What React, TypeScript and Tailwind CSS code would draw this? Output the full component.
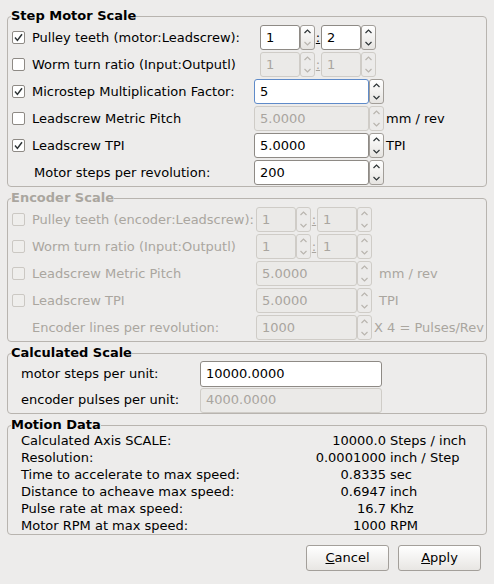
import React from "react";

const ink = "#2e3436";
const dim = "#b9b5af";

function Check({ checked, disabled }: { checked?: boolean; disabled?: boolean }) {
  return (
    <span
      className={`flex h-[13px] w-[13px] shrink-0 items-center justify-center rounded-[2px] border ${
        disabled ? "border-[#cbc8c3] bg-[#efeeec]" : "border-[#8e8a85] bg-white"
      }`}
    >
      {checked && (
        <svg width="9" height="9" viewBox="0 0 9 9">
          <path d="M1 4.6 L3.4 7.4 L8 1.2" fill="none" stroke={ink} strokeWidth="1.5" />
        </svg>
      )}
    </span>
  );
}

function Arrows({ disabled, downOff }: { disabled?: boolean; downOff?: boolean }) {
  const up = disabled ? dim : ink;
  const down = disabled || downOff ? dim : ink;
  return (
    <div
      className={`flex h-full w-[15px] shrink-0 flex-col rounded-[3px] border ${
        disabled ? "border-[#cfccc7] bg-[#ecebea]" : "border-[#a29e99] bg-gradient-to-b from-white to-[#e6e4e1]"
      }`}
    >
      <div className="flex flex-1 items-center justify-center">
        <svg width="7" height="5" viewBox="0 0 7 5">
          <path d="M0.5 4 L3.5 1 L6.5 4" fill="none" stroke={up} strokeWidth="1.2" />
        </svg>
      </div>
      <div className="flex flex-1 items-center justify-center">
        <svg width="7" height="5" viewBox="0 0 7 5">
          <path d="M0.5 1 L3.5 4 L6.5 1" fill="none" stroke={down} strokeWidth="1.2" />
        </svg>
      </div>
    </div>
  );
}

function Field({
  value,
  width,
  disabled,
  focused,
}: {
  value: string;
  width: string;
  disabled?: boolean;
  focused?: boolean;
}) {
  const tone = disabled
    ? "border-[#cfccc7] bg-[#ebeae8] text-[#a9a59f]"
    : focused
    ? "border-[#5f8bc9] bg-white text-black"
    : "border-[#8e8a85] bg-white text-black";
  return (
    <div className={`flex h-full shrink-0 items-center rounded-[3px] border pl-[5px] ${tone} ${width}`}>
      {value}
    </div>
  );
}

function Spin({
  value,
  width,
  disabled,
  focused,
  downOff,
}: {
  value: string;
  width: string;
  disabled?: boolean;
  focused?: boolean;
  downOff?: boolean;
}) {
  return (
    <div className="flex h-[25px] shrink-0">
      <Field value={value} width={width} disabled={disabled} focused={focused} />
      <Arrows disabled={disabled} downOff={downOff} />
    </div>
  );
}

function Pair({ a, b, disabled, aDownOff }: { a: string; b: string; disabled?: boolean; aDownOff?: boolean }) {
  return (
    <div className="flex items-center">
      <Spin value={a} width="w-[40px]" disabled={disabled} downOff={aDownOff} />
      <span className={`w-[6px] text-center underline ${disabled ? "text-[#a9a59f]" : "text-black"}`}>:</span>
      <Spin value={b} width="w-[40px]" disabled={disabled} downOff={disabled} />
    </div>
  );
}

function Group({ title, disabled, children }: { title: string; disabled?: boolean; children: React.ReactNode }) {
  return (
    <fieldset className="mx-[7px] min-w-0 rounded-[4px] border border-[#b8b4af] pl-[4px]">
      <legend className={`-ml-[1px] text-[13px] font-bold leading-[16px] ${disabled ? "text-[#aaa69f]" : "text-black"}`}>
        {title}
      </legend>
      {children}
    </fieldset>
  );
}

function Row({
  check,
  checked,
  disabled,
  label,
  labelW,
  indent = "ml-[22px]",
  children,
}: {
  check?: boolean;
  checked?: boolean;
  disabled?: boolean;
  label: string;
  labelW: string;
  indent?: string;
  children: React.ReactNode;
}) {
  return (
    <div className={`flex h-[27px] items-center ${disabled ? "text-[#aaa69f]" : "text-black"}`}>
      <div className={`flex shrink-0 items-center ${labelW}`}>
        {check ? (
          <>
            <Check checked={checked} disabled={disabled} />
            <span className="ml-[7px] whitespace-nowrap">{label}</span>
          </>
        ) : (
          <span className={`whitespace-nowrap ${indent}`}>{label}</span>
        )}
      </div>
      {children}
    </div>
  );
}

const motion = [
  ["Calculated Axis SCALE:", "10000.0", "Steps / inch"],
  ["Resolution:", "0.0001000", "inch / Step"],
  ["Time to accelerate to max speed:", "0.8335", "sec"],
  ["Distance to acheave max speed:", "0.6947", "inch"],
  ["Pulse rate at max speed:", "16.7", "Khz"],
  ["Motor RPM at max speed:", "1000", "RPM"],
];

export default function App() {
  return (
    <div className="h-[584px] w-[494px] overflow-hidden bg-[#edeceb] pt-[8px] font-['DejaVu_Sans',sans-serif] text-[13px] text-black">
      <Group title="Step Motor Scale">
        <Row check checked label="Pulley teeth (motor:Leadscrew):" labelW="w-[248px]">
          <Pair a="1" b="2" aDownOff />
        </Row>
        <Row check label="Worm turn ratio (Input:Outputl)" labelW="w-[248px]">
          <Pair a="1" b="1" disabled />
        </Row>
        <Row check checked label="Microstep Multiplication Factor:" labelW="w-[242px]">
          <Spin value="5" width="w-[115px]" focused />
        </Row>
        <Row check label="Leadscrew Metric Pitch" labelW="w-[242px]">
          <Spin value="5.0000" width="w-[115px]" disabled />
          <span className="ml-[2px]">mm / rev</span>
        </Row>
        <Row check checked label="Leadscrew TPI" labelW="w-[242px]">
          <Spin value="5.0000" width="w-[115px]" />
          <span className="ml-[2px]">TPI</span>
        </Row>
        <Row label="Motor steps per revolution:" labelW="w-[242px]">
          <Spin value="200" width="w-[115px]" />
        </Row>
      </Group>

      <div className="mt-[3px]">
        <Group title="Encoder Scale" disabled>
          <Row check disabled label="Pulley teeth (encoder:Leadscrew):" labelW="w-[244px]">
            <Pair a="1" b="1" disabled />
          </Row>
          <Row check disabled label="Worm turn ratio (Input:Outputl)" labelW="w-[244px]">
            <Pair a="1" b="1" disabled />
          </Row>
          <Row check disabled label="Leadscrew Metric Pitch" labelW="w-[244px]">
            <Spin value="5.0000" width="w-[101px]" disabled />
            <span className="ml-[7px]">mm / rev</span>
          </Row>
          <Row check disabled label="Leadscrew TPI" labelW="w-[244px]">
            <Spin value="5.0000" width="w-[101px]" disabled />
            <span className="ml-[7px]">TPI</span>
          </Row>
          <Row disabled label="Encoder lines per revolution:" labelW="w-[244px]" indent="ml-[20px]">
            <Spin value="1000" width="w-[101px]" disabled />
            <span className="ml-[2px]">X 4 = Pulses/Rev</span>
          </Row>
        </Group>
      </div>

      <div className="mt-[3px]">
        <Group title="Calculated Scale">
          <div className="flex h-[26px] items-center">
            <span className="w-[188px] shrink-0 whitespace-nowrap pl-[9px]">motor steps per unit:</span>
            <div className="h-[26px]">
              <Field value="10000.0000" width="w-[182px]" />
            </div>
          </div>
          <div className="flex h-[26px] items-center">
            <span className="w-[188px] shrink-0 whitespace-nowrap pl-[9px]">encoder pulses per unit:</span>
            <div className="h-[25px]">
              <Field value="4000.0000" width="w-[182px]" disabled />
            </div>
          </div>
        </Group>
      </div>

      <div className="mt-[3px]">
        <Group title="Motion Data">
          <div className="-mt-[1px]">
            {motion.map(([label, num, unit]) => (
              <div key={label} className="flex h-[17px] items-center whitespace-nowrap leading-[17px]">
                <span className="w-[226px] shrink-0 pl-[9px]">{label}</span>
                <span className="w-[148px] shrink-0 text-right">{num}</span>
                <span className="ml-[4px]">{unit}</span>
              </div>
            ))}
          </div>
        </Group>
      </div>

      <div className="mt-[10px] flex justify-end gap-[9px] pr-[13px]">
        {["Cancel", "Apply"].map((b) => (
          <button
            key={b}
            className="flex h-[26px] w-[83px] items-center justify-center rounded-[3px] border border-[#a39f9a] bg-gradient-to-b from-white to-[#e8e6e3] text-black"
          >
            <span className="underline">{b[0]}</span>
            {b.slice(1)}
          </button>
        ))}
      </div>
    </div>
  );
}
